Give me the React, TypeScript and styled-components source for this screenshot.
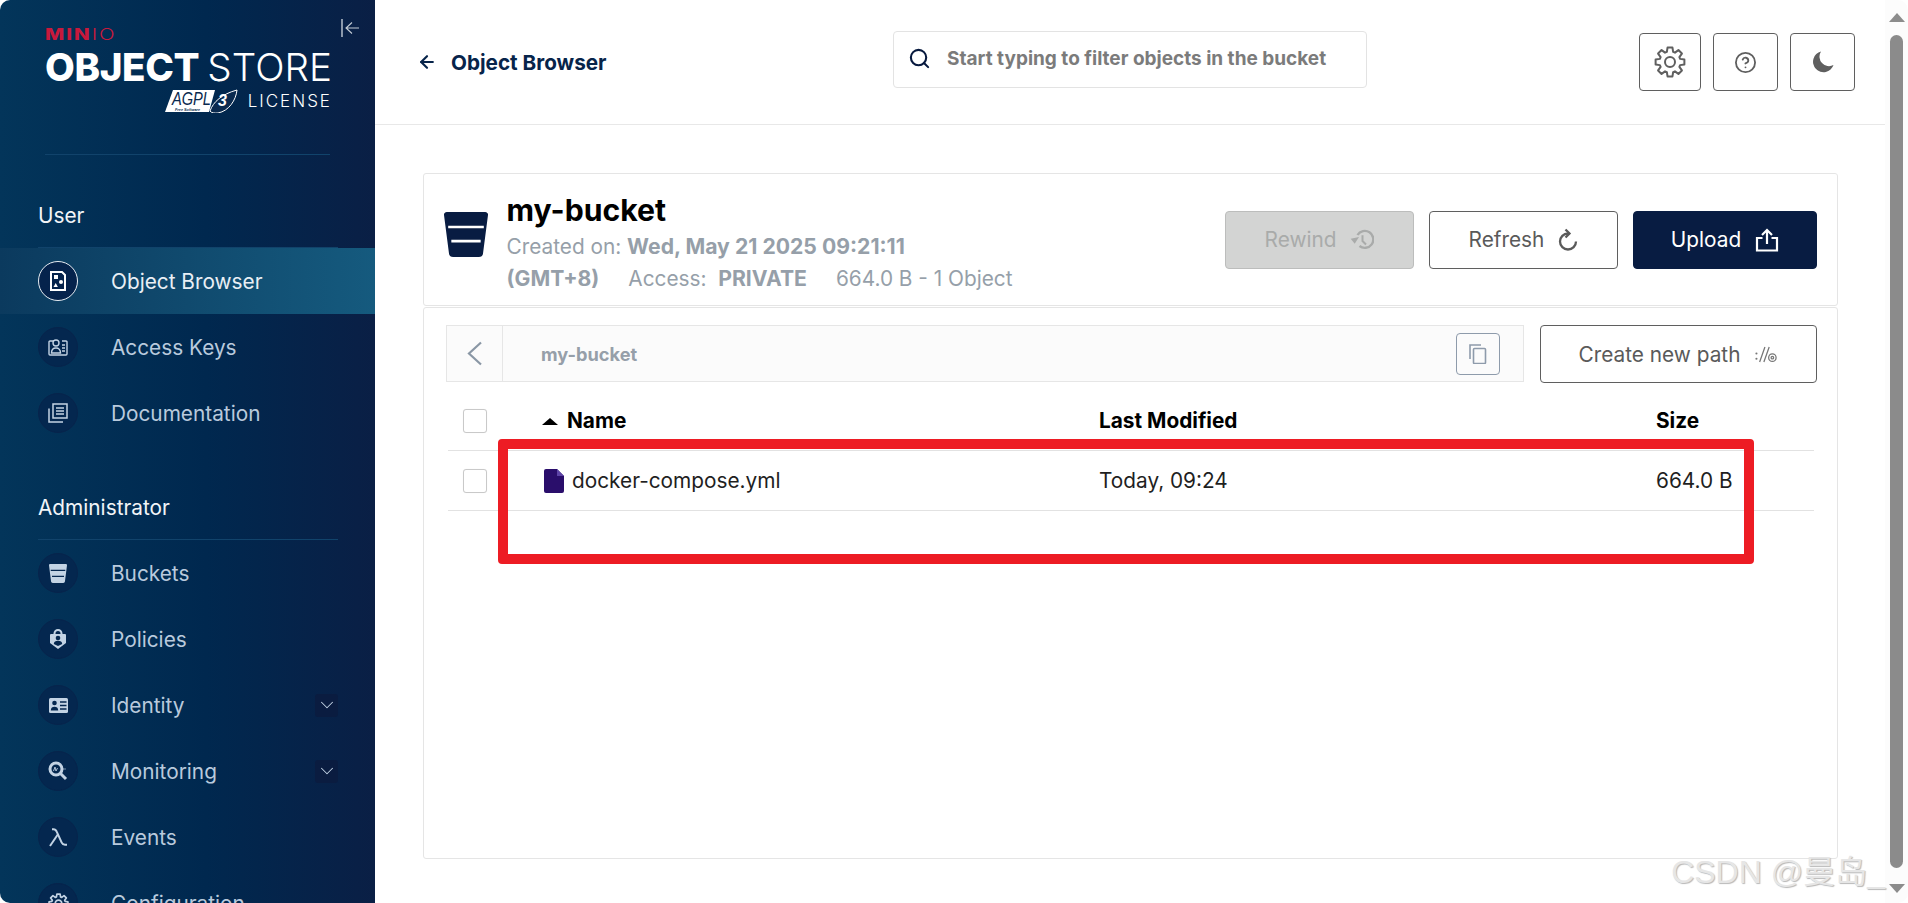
import { ReactNode } from "react"
import styled, { createGlobalStyle } from "styled-components"
import { ArrowLeft, ChevronDown, CircleHelp, Search } from "lucide-react"

const GlobalStyle = createGlobalStyle`
  html, body {
    margin: 0;
    padding: 0;
    background: #ffffff;
    overflow: hidden;
  }
  * {
    box-sizing: border-box;
  }
`

const Window = styled.div`
  position: relative;
  display: flex;
  width: 1908px;
  height: 903px;
  overflow: hidden;
  border-radius: 10px;
  font-family: Inter, "Liberation Sans", sans-serif;
  background: #ffffff;
`

/* sidebar */
const Sidebar = styled.aside`
  flex: 0 0 375px;
  height: 903px;
  overflow: hidden;
  background: linear-gradient(90deg, #03355a 0%, #00284f 55%, #0a1f45 100%);
`
const LogoBlock = styled.div`
  position: relative;
  height: 155px;
  margin: 0 45px;
  padding-top: 27px;
  border-bottom: 1px solid #11436b;
`
const Minio = styled.div`
  height: 16px;
  font-size: 15.5px;
  line-height: 16px;
  letter-spacing: 1.5px;
  font-weight: 800;
  color: #c8193c;
  transform: scaleX(1.32);
  transform-origin: left center;
  span {
    font-weight: 300;
  }
`
const ProductName = styled.div`
  margin-top: 3px;
  font-size: 38.6px;
  line-height: 42px;
  white-space: nowrap;
  color: #ffffff;
  font-weight: 800;
  letter-spacing: -0.4px;
  span {
    font-weight: 300;
    letter-spacing: 0.1px;
  }
`
const LicenseRow = styled.div`
  display: flex;
  justify-content: flex-end;
  align-items: center;
  gap: 10px;
  margin: 1px -2px 0 0;
`
const LicenseText = styled.span`
  font-size: 17px;
  letter-spacing: 2px;
  font-weight: 300;
  color: #ffffff;
`
const CollapseButton = styled.div`
  position: absolute;
  top: 19px;
  right: -29px;
  display: flex;
  color: #c3ccd6;
`
const SectionLabel = styled.div<{ $spaced?: boolean }>`
  display: flex;
  align-items: center;
  height: 93px;
  margin: ${(p) => (p.$spaced ? "1px" : "0")} 37px 0 38px;
  padding-top: 28px;
  border-bottom: 1px solid #11436b;
  color: #f2f5f8;
  font-size: 20.8px;
  font-weight: 400;
`
const NavRow = styled.div<{ $active?: boolean }>`
  display: flex;
  align-items: center;
  gap: 33px;
  height: 66px;
  padding: 0 37px 0 38px;
  font-size: 20.8px;
  color: ${(p) => (p.$active ? "#e9eff5" : "#b9cadd")};
  background: ${(p) => (p.$active ? "linear-gradient(90deg, #0b3a5e 0%, #155a7e 100%)" : "transparent")};
`
const NavCircle = styled.div<{ $active?: boolean }>`
  display: flex;
  align-items: center;
  justify-content: center;
  flex: 0 0 40px;
  width: 40px;
  height: 40px;
  border-radius: 50%;
  color: ${(p) => (p.$active ? "#ffffff" : "#c3d3e4")};
  background: ${(p) => (p.$active ? "#05234c" : "#04274f")};
  border: 1px solid ${(p) => (p.$active ? "#e6ecf2" : "#07244c")};
`
const Expander = styled.div`
  display: flex;
  align-items: center;
  justify-content: center;
  width: 23px;
  height: 23px;
  margin-left: auto;
  border-radius: 3px;
  background: #0a1c40;
  color: #c3d3e4;
`

/* main column */
const Main = styled.main`
  flex: 1;
  display: flex;
  flex-direction: column;
  height: 903px;
  min-width: 0;
`
const Header = styled.header`
  display: grid;
  grid-template-columns: 518px 474px 1fr;
  align-items: center;
  flex: 0 0 125px;
  border-bottom: 1px solid #e8e8e8;
`
const BackLink = styled.div`
  display: flex;
  align-items: center;
  gap: 14px;
  padding-left: 42px;
  font-size: 20.7px;
  font-weight: 700;
  color: #07244a;
`
const SearchBox = styled.div`
  display: flex;
  align-items: center;
  gap: 16px;
  height: 57px;
  margin-bottom: 5px;
  padding: 0 0 2px 14px;
  border: 1px solid #e3e3e3;
  border-radius: 4px;
  color: #07193e;
`
const Placeholder = styled.span`
  font-size: 19px;
  font-weight: 700;
  color: #7b7b7b;
  white-space: nowrap;
`
const HeaderButtons = styled.div`
  display: flex;
  justify-content: flex-end;
  gap: 12px;
  padding-right: 30px;
`
const SquareButton = styled.div<{ $width: number }>`
  display: flex;
  align-items: center;
  justify-content: center;
  width: ${(p) => p.$width}px;
  height: 58px;
  border: 1px solid #5f5f5f;
  border-radius: 4px;
  color: #5f5f5f;
`
const Content = styled.div`
  flex: 1;
  display: flex;
  flex-direction: column;
  padding: 48px 47px 44px 48px;
`
const BucketCard = styled.section`
  display: flex;
  align-items: center;
  flex: 0 0 133px;
  padding: 0 20px;
  border: 1px solid #e5e5e5;
  border-radius: 3px;
`
const BucketBadge = styled.div`
  display: flex;
  margin: 0 18.5px 10px 0;
  color: #081c42;
`
const BucketInfo = styled.div`
  display: flex;
  flex-direction: column;
  align-self: flex-start;
  padding-top: 16px;
`
const BucketName = styled.h1`
  margin: 0;
  font-size: 30.2px;
  line-height: 40px;
  font-weight: 700;
  color: #000000;
`
const MetaLine = styled.div`
  display: flex;
  gap: 29px;
  height: 32px;
  align-items: center;
  font-size: 20.8px;
  color: #969fa9;
  white-space: pre;
  b {
    font-size: 21.2px;
    font-weight: 700;
  }
`
const CardActions = styled.div`
  display: flex;
  gap: 15px;
  margin-left: auto;
`
const ActionButton = styled.div<{ $variant?: "disabled" | "primary"; $width: number }>`
  display: flex;
  align-items: center;
  justify-content: center;
  gap: 14px;
  width: ${(p) => p.$width}px;
  height: 58px;
  border-radius: 4px;
  font-size: 20.8px;
  border: 1px solid
    ${(p) => (p.$variant === "disabled" ? "#bcbdbc" : p.$variant === "primary" ? "#081c42" : "#5f5f5f")};
  background: ${(p) => (p.$variant === "disabled" ? "#d3d4d3" : p.$variant === "primary" ? "#081c42" : "#ffffff")};
  color: ${(p) => (p.$variant === "disabled" ? "#a9abaa" : p.$variant === "primary" ? "#ffffff" : "#5a5a5a")};
`
const ObjectsPanel = styled.section`
  flex: 1;
  margin-top: 1px;
  padding: 17px 20px 0 22px;
  border: 1px solid #e5e5e5;
  border-radius: 3px;
`
const PathRow = styled.div`
  display: flex;
  gap: 16px;
`
const Breadcrumb = styled.div`
  display: flex;
  align-items: center;
  flex: 1;
  height: 57px;
  border: 1px solid #e6e6e6;
  background: #fbfbfb;
`
const BackCell = styled.div`
  display: flex;
  align-items: center;
  justify-content: center;
  flex: 0 0 56px;
  height: 100%;
  border-right: 1px solid #e6e6e6;
  color: #8a97a5;
`
const CrumbText = styled.span`
  padding-left: 38px;
  font-size: 18.2px;
  font-weight: 700;
  color: #969fa9;
`
const CopyButton = styled.div`
  display: flex;
  align-items: center;
  justify-content: center;
  width: 44px;
  height: 42px;
  margin: 0 23px 0 auto;
  border: 1px solid #8e9bab;
  border-radius: 4px;
  color: #8e9bab;
`
const Table = styled.div`
  position: relative;
  margin: 0 3px 0 2px;
`
const TableRow = styled.div<{ $head?: boolean }>`
  display: grid;
  grid-template-columns: 94px 557px 557px 1fr;
  align-items: center;
  height: ${(p) => (p.$head ? "68px" : "60px")};
  padding-top: ${(p) => (p.$head ? "8px" : "0")};
  border-bottom: 1px solid #e2e2e2;
  font-size: 20.8px;
  font-weight: ${(p) => (p.$head ? 700 : 400)};
  color: ${(p) => (p.$head ? "#000000" : "#1f1f1f")};
`
const Checkbox = styled.div`
  width: 24px;
  height: 24px;
  margin-left: 15px;
  border: 1px solid #c9c9c9;
  border-radius: 3px;
  background: #ffffff;
  box-shadow: 0 0 1px rgba(0, 0, 0, 0.08);
`
const NameCell = styled.div`
  display: flex;
  align-items: center;
  padding-left: 2px;
  gap: 8px;
`
const SortCell = styled.div`
  display: flex;
  align-items: center;
  gap: 9px;
`
const SortArrow = styled.span`
  width: 0;
  height: 0;
  margin-top: 2px;
  border-left: 8px solid transparent;
  border-right: 8px solid transparent;
  border-bottom: 7px solid #000000;
`
const RedMark = styled.div`
  position: absolute;
  top: 56px;
  left: 50px;
  width: 1256px;
  height: 125px;
  border: 10px solid #ed1c24;
  border-radius: 4px;
`
const Scrollbar = styled.div`
  display: flex;
  flex-direction: column;
  align-items: center;
  flex: 0 0 23px;
  height: 903px;
  padding: 13px 0 10px;
  background: #fcfcfc;
`
const ScrollUp = styled.span`
  flex: none;
  border-left: 8px solid transparent;
  border-right: 8px solid transparent;
  border-bottom: 9px solid #8c8c8c;
`
const ScrollDown = styled.span`
  flex: none;
  margin-top: 16px;
  border-left: 8px solid transparent;
  border-right: 8px solid transparent;
  border-top: 9px solid #8c8c8c;
`
const ScrollThumb = styled.div`
  flex: 1;
  width: 13px;
  margin-top: 13px;
  border-radius: 7px;
  background: #8b8b8b;
`
const Watermark = styled.div`
  position: absolute;
  right: 23px;
  bottom: 12px;
  font-family: "Liberation Sans", "Noto Sans CJK SC", sans-serif;
  font-size: 32px;
  line-height: 38px;
  color: #e6e6e6;
  text-shadow: 1px 1px 1px #b8b8b8;
  white-space: nowrap;
`

/* drawn icons */
const gearOutline = () => {
  // eight square teeth round the centre of a 32 x 32 box
  const points: string[] = []
  const teeth = 8
  for (let i = 0; i < teeth; i++) {
    const a = (i * 2 * Math.PI) / teeth
    const at = (r: number, off: number) => {
      const x = 16 + r * Math.cos(a + off)
      const y = 16 + r * Math.sin(a + off)
      return `${x.toFixed(2)} ${y.toFixed(2)}`
    }
    points.push(at(10.6, -0.3), at(14.6, -0.17), at(14.6, 0.17), at(10.6, 0.3))
  }
  return `M${points.join("L")}z`
}
const GearIcon = ({ size, weight }: { size: number; weight: number }) => (
  <svg width={size} height={size} viewBox="0 0 32 32" fill="none" stroke="currentColor" strokeWidth={weight} strokeLinejoin="round">
    <path d={gearOutline()} />
    <circle cx="16" cy="16" r="5" />
  </svg>
)
const BucketIcon = ({ width, height, stripe, weight }: { width: number; height: number; stripe: string; weight: number }) => (
  <svg width={width} height={height} viewBox="1.5 0 21 24" preserveAspectRatio="none">
    <path
      fill="currentColor"
      d="M1.500 1.600A1.400 1.400 0 0 1 2.900 0h18.200a1.400 1.400 0 0 1 1.400 1.600l-2.400 20.600a2 2 0 0 1-2 1.800H5.900a2 2 0 0 1-2-1.800z"
    />
    <path stroke={stripe} strokeWidth={weight} d="M3.500 8h17M5 15.500h14" />
  </svg>
)
const ObjectBrowserIcon = () => (
  <svg width="20" height="22" viewBox="0 0 20 22" fill="none" stroke="currentColor" strokeWidth="2">
    <path d="M3 2h11l3 3v15H3z" />
    <rect x="6" y="5" width="4" height="4" fill="currentColor" stroke="none" />
    <circle cx="13" cy="12" r="2" fill="currentColor" stroke="none" />
    <path d="M5.500 17l2.200-4 2.200 4z" fill="currentColor" stroke="none" />
  </svg>
)
const AccessKeysIcon = () => (
  <svg width="20" height="18" viewBox="0 0 20 18" fill="none" stroke="currentColor" strokeWidth="1.400">
    <path d="M6 3H2a1 1 0 0 0-1 1v12a1 1 0 0 0 1 1h16a1 1 0 0 0 1-1V4a1 1 0 0 0-1-1h-4" />
    <circle cx="8" cy="5" r="3" />
    <path d="M3.500 15c0-3.500 2-5 4.500-5s4.500 1.500 4.500 5z" />
    <path d="M14 7h3M14 10h3M14 13h3" />
  </svg>
)
const DocumentationIcon = () => (
  <svg width="20" height="20" viewBox="0 0 20 20" fill="none" stroke="currentColor" strokeWidth="1.500">
    <path d="M5 1h14v14H5z" />
    <path d="M1 5.500V19h14" />
    <path d="M8 5h8M8 8h8M8 11h8" />
  </svg>
)
const PoliciesIcon = () => (
  <svg width="16" height="20" viewBox="0 0 16 20">
    <path fill="currentColor" d="M8 0a4.500 4.500 0 0 0-4.500 4.500V5H1a1 1 0 0 0-1 1v8l8 6 8-6V6a1 1 0 0 0-1-1h-2.500v-.500A4.500 4.500 0 0 0 8 0zm0 2a2.500 2.500 0 0 1 2.500 2.500V5h-5v-.500A2.500 2.500 0 0 1 8 2z" />
    <circle cx="8" cy="9" r="2.300" fill="#04274f" />
    <path fill="#04274f" d="M3.800 15c0-2.500 1.800-3.200 4.200-3.200s4.200.7 4.200 3.200L8 17z" />
  </svg>
)
const IdentityIcon = () => (
  <svg width="19" height="15" viewBox="0 0 19 15">
    <rect width="19" height="15" rx="1.500" fill="currentColor" />
    <circle cx="5.500" cy="5" r="2.300" fill="#04274f" />
    <path fill="#04274f" d="M1.800 12.500c0-2.700 1.600-3.700 3.700-3.700s3.700 1 3.700 3.700z" />
    <path stroke="#04274f" strokeWidth="1.300" d="M11 4h6.500M11 7.500h6.500M11 11h6.500" />
  </svg>
)
const MonitoringIcon = () => (
  <svg width="20" height="20" viewBox="0 0 20 20" fill="none" stroke="currentColor">
    <circle cx="8" cy="8" r="6" strokeWidth="3" />
    <path d="M12.500 12.500l5.500 5.500" strokeWidth="3" />
    <path d="M5.500 10l1.500-4 1 4 1.500-3" strokeWidth="0.900" />
    <path d="M14 8h4" strokeWidth="1" opacity="0.6" />
  </svg>
)
const LambdaIcon = () => (
  <svg width="19" height="19" viewBox="0 0 19 19" fill="none" stroke="currentColor" strokeWidth="2">
    <path d="M3 1.200h1.500c1.500 0 2.500.8 3.200 2.500l5 11c.6 1.300 1.600 2 3.300 2h2" />
    <path d="M8.800 6.500L1 18" />
  </svg>
)
const CollapseIcon = () => (
  <svg width="18" height="18" viewBox="0 0 18 18" fill="none" stroke="currentColor" strokeWidth="1.100">
    <path d="M1 0v18" strokeWidth="1.400" />
    <path d="M5 9h13M11 3.500L5 9l6 5.500" />
  </svg>
)
const MoonIcon = () => (
  <svg width="22" height="22" viewBox="0 0 22 22">
    <path fill="currentColor" d="M9 0.500a10.500 10.500 0 1 0 12.500 13.500A9.500 9.500 0 0 1 9 0.500z" />
  </svg>
)
const RewindIcon = () => (
  <svg width="24" height="21" viewBox="0 0 24 21" fill="none" stroke="currentColor" strokeWidth="2.400">
    <path d="M7.500 6A8.500 8.500 0 1 1 9.500 17" />
    <path d="M0.700 9.700L9 8L4.700 14.700z" fill="currentColor" stroke="none" />
    <path d="M12.500 6.300V12l3.500 3.500" strokeWidth="2" />
  </svg>
)
const RefreshIcon = () => (
  <svg width="20" height="23" viewBox="0 0 20 23" fill="none" stroke="currentColor" strokeWidth="2.300">
    <path d="M18 13.500a8 8 0 1 1-8-8" />
    <path d="M7.500 1.500L11.500 5.500L7.500 9.500" />
  </svg>
)
const UploadIcon = () => (
  <svg width="24" height="24" viewBox="0 0 24 24" fill="none" stroke="currentColor" strokeWidth="2.200">
    <path d="M12 16V2M7 7l5-5 5 5" />
    <path d="M7.500 10H2v12.500h20V10h-5.500" />
  </svg>
)
const NewPathIcon = () => (
  <svg width="24" height="17" viewBox="0 0 22 16" fill="none" stroke="#777777" strokeWidth="1.200">
    <circle cx="2" cy="7" r="1" fill="#777777" stroke="none" />
    <circle cx="2" cy="12" r="1" fill="#777777" stroke="none" />
    <path d="M10 1L5 15M14 1L9 15" />
    <circle cx="17" cy="11" r="3.500" />
    <circle cx="17" cy="11" r="1.200" />
  </svg>
)
const CopyIcon = () => (
  <svg width="18" height="20" viewBox="0 0 18 20" fill="none" stroke="currentColor" strokeWidth="1.600">
    <path d="M1 15V1h11" />
    <rect x="4.500" y="4.500" width="12" height="15" rx="1" />
  </svg>
)
const BackChevron = () => (
  <svg width="17" height="25" viewBox="0 0 17 25" fill="none" stroke="currentColor" strokeWidth="2.200">
    <path d="M15 1.500L3 12.500l12 11" />
  </svg>
)
const FileIcon = () => (
  <svg width="20" height="24" viewBox="0 0 20 24">
    <path fill="#2a0e6b" d="M2 0h11l7 7v15a2 2 0 0 1-2 2H2a2 2 0 0 1-2-2V2a2 2 0 0 1 2-2z" />
    <path fill="#5d43a6" d="M13 0l7 7h-7z" />
  </svg>
)
const AgplBadge = () => (
  <svg width="73" height="24" viewBox="0 0 73 24">
    <path fill="#ffffff" d="M8 1h42l-6 22H0z" />
    <text x="7" y="16" textLength="39" lengthAdjust="spacingAndGlyphs" fontFamily="Liberation Sans, sans-serif" fontStyle="italic" fontSize="18" fill="#0a2a4f">
      AGPL
    </text>
    <text x="10" y="21.500" fontFamily="Liberation Sans, sans-serif" fontWeight="700" fontStyle="italic" fontSize="3.800" fill="#0a2a4f">
      Free Software
    </text>
    <path fill="#0a2a4f" stroke="#ffffff" strokeWidth="1" d="M45 22c3-9 12-17 27-21-1 10-8 21-19 23-3 .3-7 0-8-2z" />
    <text x="53" y="17" fontFamily="Liberation Sans, sans-serif" fontStyle="italic" fontWeight="700" fontSize="16" fill="#ffffff">
      3
    </text>
  </svg>
)

const NavItem = ({ icon, label, active, expandable }: { icon: ReactNode; label: string; active?: boolean; expandable?: boolean }) => (
  <NavRow $active={active}>
    <NavCircle $active={active}>{icon}</NavCircle>
    {label}
    {expandable && (
      <Expander>
        <ChevronDown size={22} strokeWidth={1.1} />
      </Expander>
    )}
  </NavRow>
)

const App = () => {
  return (
    <Window>
      <GlobalStyle />
      <Sidebar>
        <LogoBlock>
          <Minio>
            MIN<span>IO</span>
          </Minio>
          <ProductName>
            OBJECT <span>STORE</span>
          </ProductName>
          <LicenseRow>
            <AgplBadge />
            <LicenseText>LICENSE</LicenseText>
          </LicenseRow>
          <CollapseButton>
            <CollapseIcon />
          </CollapseButton>
        </LogoBlock>
        <SectionLabel>User</SectionLabel>
        <NavItem active icon={<ObjectBrowserIcon />} label="Object Browser" />
        <NavItem icon={<AccessKeysIcon />} label="Access Keys" />
        <NavItem icon={<DocumentationIcon />} label="Documentation" />
        <SectionLabel $spaced>Administrator</SectionLabel>
        <NavItem icon={<BucketIcon width={18} height={19} stripe="#04274f" weight={1.6} />} label="Buckets" />
        <NavItem icon={<PoliciesIcon />} label="Policies" />
        <NavItem icon={<IdentityIcon />} label="Identity" expandable />
        <NavItem icon={<MonitoringIcon />} label="Monitoring" expandable />
        <NavItem icon={<LambdaIcon />} label="Events" />
        <NavItem icon={<GearIcon size={21} weight={2.6} />} label="Configuration" />
      </Sidebar>
      <Main>
        <Header>
          <BackLink>
            <ArrowLeft size={20} strokeWidth={2.6} />
            Object Browser
          </BackLink>
          <SearchBox>
            <Search size={23} strokeWidth={2.2} />
            <Placeholder>Start typing to filter objects in the bucket</Placeholder>
          </SearchBox>
          <HeaderButtons>
            <SquareButton $width={62}>
              <GearIcon size={32} weight={2} />
            </SquareButton>
            <SquareButton $width={65}>
              <CircleHelp size={23} strokeWidth={1.9} />
            </SquareButton>
            <SquareButton $width={65}>
              <MoonIcon />
            </SquareButton>
          </HeaderButtons>
        </Header>
        <Content>
          <BucketCard>
            <BucketBadge>
              <BucketIcon width={44} height={45} stripe="#ffffff" weight={1.4} />
            </BucketBadge>
            <BucketInfo>
              <BucketName>my-bucket</BucketName>
              <MetaLine>
                <span>
                  Created on: <b>Wed, May 21 2025 09:21:11</b>
                </span>
              </MetaLine>
              <MetaLine>
                <b>(GMT+8)</b>
                <span>
                  Access:  <b>PRIVATE</b>
                </span>
                <span>664.0 B - 1 Object</span>
              </MetaLine>
            </BucketInfo>
            <CardActions>
              <ActionButton $variant="disabled" $width={189}>
                Rewind
                <RewindIcon />
              </ActionButton>
              <ActionButton $width={189}>
                Refresh
                <RefreshIcon />
              </ActionButton>
              <ActionButton $variant="primary" $width={184}>
                Upload
                <UploadIcon />
              </ActionButton>
            </CardActions>
          </BucketCard>
          <ObjectsPanel>
            <PathRow>
              <Breadcrumb>
                <BackCell>
                  <BackChevron />
                </BackCell>
                <CrumbText>my-bucket</CrumbText>
                <CopyButton>
                  <CopyIcon />
                </CopyButton>
              </Breadcrumb>
              <ActionButton $width={277}>
                Create new path
                <NewPathIcon />
              </ActionButton>
            </PathRow>
            <Table>
              <TableRow $head>
                <Checkbox />
                <SortCell>
                  <SortArrow />
                  Name
                </SortCell>
                <span>Last Modified</span>
                <span>Size</span>
              </TableRow>
              <TableRow>
                <Checkbox />
                <NameCell>
                  <FileIcon />
                  docker-compose.yml
                </NameCell>
                <span>Today, 09:24</span>
                <span>664.0 B</span>
              </TableRow>
              <RedMark />
            </Table>
          </ObjectsPanel>
        </Content>
      </Main>
      <Scrollbar>
        <ScrollUp />
        <ScrollThumb />
        <ScrollDown />
      </Scrollbar>
      <Watermark>CSDN @曼岛_</Watermark>
    </Window>
  )
}

export default App
